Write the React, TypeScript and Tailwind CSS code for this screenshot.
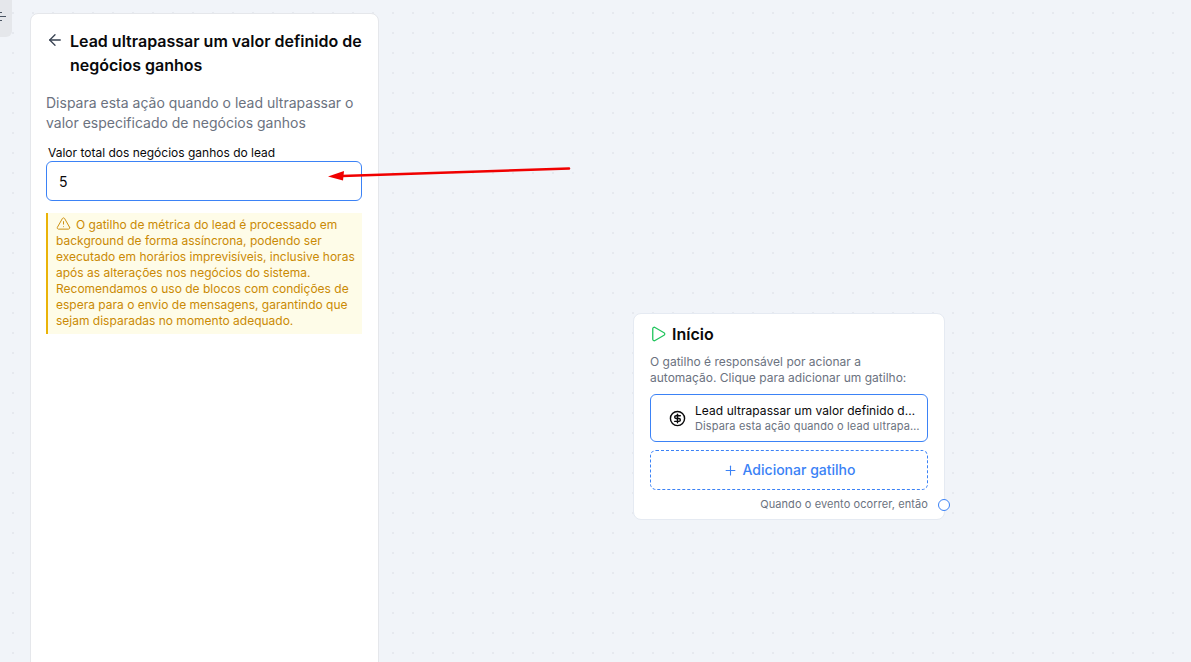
import React from 'react';
import { ArrowLeft, TriangleAlert, Play, CircleDollarSign, Plus } from 'lucide-react';

function StartNode() {
  return (
    <div className="absolute left-[633px] top-[313px] w-[312px] h-[207px] bg-white border border-[#e5eaf2] rounded-lg px-4 pt-[8px]">
      <div className="flex items-center gap-[5px] h-6">
        <Play size={18} strokeWidth={1.75} className="text-[#22c55e] -ml-[1px]" />
        <span className="text-base font-semibold text-[#09090b]">Início</span>
      </div>
      <p className="mt-[8px] text-xs leading-4 text-[#6b7280]">
        O gatilho é responsável por acionar a automação. Clique para adicionar um gatilho:
      </p>
      <div className="mt-2 h-12 w-[278px] flex items-center border border-[#3b82f6] rounded-md">
        <CircleDollarSign size={17} strokeWidth={2} className="ml-[18px] shrink-0 text-[#09090b]" />
        <div className="ml-[9px] min-w-0 w-[226px]">
          <div className="text-xs leading-4 text-[#09090b] truncate tracking-[0.005em]">Lead ultrapassar um valor definido de negócios ganhos</div>
          <div className="text-[11px] leading-[14px] text-[#6b7280] truncate tracking-[0.012em]">Dispara esta ação quando o lead ultrapassar o valor</div>
        </div>
      </div>
      <div className="mt-2 h-10 w-[278px] flex items-center justify-center gap-[5px] border border-dashed border-[#3b82f6] rounded-md text-[#3b82f6]">
        <Plus size={15} strokeWidth={1.75} />
        <span className="text-sm font-medium">Adicionar gatilho</span>
      </div>
      <div className="mt-[6px] w-[278px] text-right text-[11px] leading-[16px] text-[#6b7280] tracking-[0.008em]">Quando o evento ocorrer, então</div>
      <div className="absolute right-[-6px] bottom-[8px] w-3 h-3 rounded-full bg-white border border-[#3b82f6]" />
    </div>
  );
}

export default function App() {
  return (
    <div className="relative w-full h-screen overflow-hidden bg-[#f1f4f9] bg-[radial-gradient(#e6e9ef_1px,transparent_1px)] bg-[size:20px_20px] bg-[position:3px_3px] font-['Inter',sans-serif]">
      <div className="absolute left-0 top-0 w-3 h-[37px] bg-[#e5e7eb] rounded-br-md overflow-hidden">
        <div className="absolute left-0 top-[16px] w-[6px] h-px bg-[#4b5563]" />
        <div className="absolute left-0 top-[12px] w-[2px] h-px bg-[#4b5563]" />
        <div className="absolute left-0 top-[20px] w-[2px] h-px bg-[#4b5563]" />
      </div>

      <div className="ml-[30px] pt-[13px] h-full">
        <div className="w-[349px] h-[670px] bg-white border border-[#e5e7eb] rounded-lg px-[15px] pt-[15px]">
          <div className="flex items-start gap-[6px]">
            <ArrowLeft size={18} strokeWidth={1.75} className="mt-[2px] shrink-0 text-[#374151]" />
            <h1 className="w-[296px] shrink-0 text-base leading-6 font-semibold text-[#09090b]">Lead ultrapassar um valor definido de negócios ganhos</h1>
          </div>
          <p className="mt-[16px] text-sm leading-5 text-[#6b7280]">
            Dispara esta ação quando o lead ultrapassar o valor especificado de negócios ganhos
          </p>
          <label className="block mt-[12px] ml-[2px] text-xs leading-4 text-[#09090b]">Valor total dos negócios ganhos do lead</label>
          <div className="h-10 w-[316px] flex items-center px-3 pt-[2px] border border-[#3b82f6] rounded-md text-sm text-[#09090b]">5</div>
          <div className="mt-3 w-[316px] border-l-2 border-[#eab308] bg-[#fefce8] pl-2 pr-1 pt-[3px] pb-[5px] text-xs leading-4 text-[#ca8a04]">
            <TriangleAlert size={15} strokeWidth={1.5} className="inline-block mr-[5px] align-[-2px]" />
            O gatilho de métrica do lead é processado em background de forma assíncrona, podendo ser executado em horários imprevisíveis, inclusive horas após as alterações nos negócios do sistema. Recomendamos o uso de blocos com condições de espera para o envio de mensagens, garantindo que sejam disparadas no momento adequado.
          </div>
        </div>
      </div>

      <StartNode />

      <svg className="absolute left-[324px] top-[160px]" width="250" height="24" viewBox="0 0 250 24" fill="none">
        <path d="M245 8.5 L18 16" stroke="#f00000" strokeWidth="2.6" strokeLinecap="round" />
        <path d="M4 16.5 L20 11 L19 20.5 Z" fill="#f00000" />
      </svg>
    </div>
  );
}
